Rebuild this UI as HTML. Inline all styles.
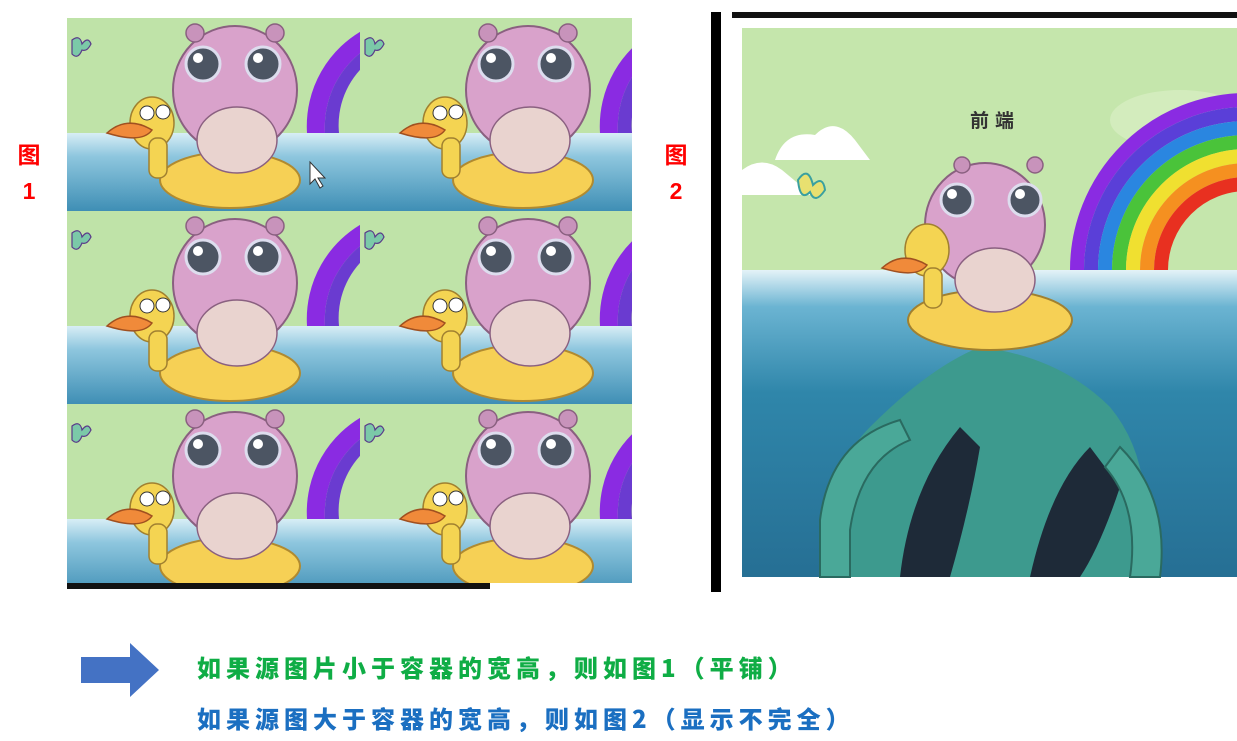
<!DOCTYPE html>
<html><head><meta charset="utf-8"><style>
html,body{margin:0;padding:0;background:#fff;width:1237px;height:741px;overflow:hidden;position:relative;font-family:"Liberation Sans","Noto Sans CJK SC",sans-serif}
.red{position:absolute;color:#f00;font-weight:bold;font-size:23px;line-height:36px;text-align:center;width:24px}
.t{position:absolute;left:197px;font-weight:900;font-size:24px;letter-spacing:5px;white-space:nowrap;font-family:"Noto Sans CJK SC","WenQuanYi Zen Hei",sans-serif}
</style></head><body>
<svg width="1237" height="741" style="position:absolute;left:0;top:0">
<defs>
<linearGradient id="wat" x1="0" y1="0" x2="0" y2="1"><stop offset="0" stop-color="#d8eef6"/><stop offset="0.3" stop-color="#8ec6de"/><stop offset="1" stop-color="#3f8fb5"/></linearGradient>
<linearGradient id="wat2" x1="0" y1="0" x2="0" y2="1"><stop offset="0" stop-color="#e4f3f8"/><stop offset="0.12" stop-color="#6bb4d2"/><stop offset="0.4" stop-color="#2f86aa"/><stop offset="1" stop-color="#266f94"/></linearGradient>
<symbol id="tile" viewBox="0 0 293 193" width="293" height="193">
<rect width="293" height="115" fill="#bfe3a8"/>
<rect y="115" width="293" height="78" fill="url(#wat)"/>
<path d="M240 115 A110 110 0 0 1 300 10 L300 30 A95 95 0 0 0 258 115Z" fill="#8a2be2"/>
<path d="M258 115 A95 95 0 0 1 300 30 L300 45 A82 82 0 0 0 272 115Z" fill="#6a3bd0"/>
<path d="M5 22 q8 -6 10 4 q6 -8 9 0 q-4 8 -9 6 q-4 10 -10 4z" fill="#7bc9a8" stroke="#5a3a8a" stroke-width="1.2"/>
<ellipse cx="163" cy="162" rx="70" ry="28" fill="#f6d055" stroke="#b08a30" stroke-width="2"/>
<ellipse cx="168" cy="72" rx="62" ry="64" fill="#d9a2cb" stroke="#8a6080" stroke-width="2"/>
<circle cx="128" cy="15" r="9" fill="#c893bb" stroke="#8a6080" stroke-width="1.5"/>
<circle cx="208" cy="15" r="9" fill="#c893bb" stroke="#8a6080" stroke-width="1.5"/>
<ellipse cx="170" cy="122" rx="40" ry="33" fill="#e9d3cf" stroke="#8a6080" stroke-width="1.5"/>
<circle cx="136" cy="46" r="17" fill="#4c5563" stroke="#dde" stroke-width="3"/>
<circle cx="196" cy="46" r="17" fill="#4c5563" stroke="#dde" stroke-width="3"/>
<circle cx="131" cy="40" r="5" fill="#fff"/><circle cx="191" cy="40" r="5" fill="#fff"/>
<ellipse cx="85" cy="105" rx="22" ry="26" fill="#f4d452" stroke="#a08030" stroke-width="1.5"/>
<path d="M40 115 q20 -18 45 -3 q-10 14 -45 3z" fill="#f08a3a" stroke="#a05020" stroke-width="1.5"/>
<circle cx="80" cy="95" r="7" fill="#fff" stroke="#333"/><circle cx="96" cy="94" r="7" fill="#fff" stroke="#333"/>
<rect x="82" y="120" width="18" height="40" rx="8" fill="#f4d452" stroke="#a08030" stroke-width="1.5"/>
</symbol>
<clipPath id="lc"><rect x="67" y="18" width="565" height="565"/></clipPath>
</defs>
<g clip-path="url(#lc)">
<use href="#tile" x="67" y="18"/><use href="#tile" x="360" y="18"/>
<use href="#tile" x="67" y="211"/><use href="#tile" x="360" y="211"/>
<use href="#tile" x="67" y="404"/><use href="#tile" x="360" y="404"/>
</g>
<rect x="67" y="583" width="423" height="6" fill="#111"/>
<path d="M310 162 l0 22 l5 -5 l5 9 l3 -2 l-5 -8 l7 0z" fill="#fff" stroke="#333" stroke-width="1"/>
<rect x="711" y="12" width="10" height="580" fill="#000"/>
<rect x="732" y="12" width="505" height="6" fill="#111"/>
<rect x="742" y="28" width="495" height="242" fill="#c5e6ac"/>
<ellipse cx="1180" cy="120" rx="70" ry="30" fill="#d3ecbd"/>
<rect x="742" y="270" width="495" height="307" fill="url(#wat2)"/>
<path d="M775 160 q10 -30 40 -25 q20 -20 40 5 l15 20z" fill="#fff"/>
<path d="M742 195 l0 -25 q20 -15 40 0 l30 25z" fill="#fff"/>
<path d="M798 180 q10 -15 15 5 q10 -10 12 5 q-10 15 -15 2 q-10 10 -12 -12z" fill="#e8e070" stroke="#3aa0a0" stroke-width="2"/>
<g fill="none">
<path d="M1077 270 A170 170 0 0 1 1247 100" stroke="#8a2be2" stroke-width="14"/>
<path d="M1091 270 A156 156 0 0 1 1247 114" stroke="#5a3fd8" stroke-width="14"/>
<path d="M1105 270 A142 142 0 0 1 1247 128" stroke="#2a86e0" stroke-width="14"/>
<path d="M1119 270 A128 128 0 0 1 1247 142" stroke="#4ac33a" stroke-width="14"/>
<path d="M1133 270 A114 114 0 0 1 1247 156" stroke="#f0e030" stroke-width="14"/>
<path d="M1147 270 A100 100 0 0 1 1247 170" stroke="#f59020" stroke-width="14"/>
<path d="M1161 270 A86 86 0 0 1 1247 184" stroke="#e83020" stroke-width="14"/>
</g>
<path d="M850 577 q-40 -90 20 -150 q60 -60 110 -80 q80 10 130 60 q50 60 30 170z" fill="#3d9a8e"/>
<path d="M900 577 q10 -90 60 -150 l20 20 q-10 60 -30 130z" fill="#1e2a38"/>
<path d="M1030 577 q20 -90 60 -130 l30 40 q-20 60 -40 90z" fill="#1e2a38"/>
<path d="M820 520 q10 -80 80 -100 l10 20 q-50 20 -60 90 l0 47 l-30 0z" fill="#4aa898" stroke="#2a6a60" stroke-width="2"/>
<path d="M1160 577 q10 -80 -40 -130 l-15 20 q35 40 25 110z" fill="#4aa898" stroke="#2a6a60" stroke-width="2"/>
<ellipse cx="990" cy="320" rx="82" ry="30" fill="#f6d055" stroke="#a08030" stroke-width="2"/>
<ellipse cx="985" cy="225" rx="60" ry="62" fill="#d9a2cb" stroke="#8a6080" stroke-width="2"/>
<circle cx="962" cy="165" r="8" fill="#c893bb" stroke="#8a6080" stroke-width="1.5"/>
<circle cx="1035" cy="165" r="8" fill="#c893bb" stroke="#8a6080" stroke-width="1.5"/>
<ellipse cx="995" cy="280" rx="40" ry="32" fill="#e9d3cf" stroke="#8a6080" stroke-width="1.5"/>
<circle cx="957" cy="200" r="16" fill="#4c5563" stroke="#dde" stroke-width="3"/>
<circle cx="1025" cy="200" r="16" fill="#4c5563" stroke="#dde" stroke-width="3"/>
<circle cx="952" cy="194" r="5" fill="#fff"/><circle cx="1020" cy="194" r="5" fill="#fff"/>
<ellipse cx="927" cy="250" rx="22" ry="26" fill="#f4d452" stroke="#a08030" stroke-width="1.5"/>
<path d="M882 268 q20 -18 45 -3 q-10 14 -45 3z" fill="#f08a3a" stroke="#a05020" stroke-width="1.5"/>
<rect x="924" y="268" width="18" height="40" rx="8" fill="#f4d452" stroke="#a08030" stroke-width="1.5"/>
<text x="995" y="127" font-size="19" font-weight="bold" fill="#333" text-anchor="middle" font-family="Noto Sans CJK SC,sans-serif" letter-spacing="6">前端</text>
<path d="M81 657 L130 657 L130 643 L159 670 L130 697 L130 683 L81 683Z" fill="#4472c4"/>
</svg>
<div class="red" style="left:17px;top:137px">图<br>1</div>
<div class="red" style="left:664px;top:137px">图<br>2</div>
<div class="t" style="top:649px;color:#0fad45">如果源图片小于容器的宽高，则如图1（平铺）</div>
<div class="t" style="top:700px;color:#1b6fc1">如果源图大于容器的宽高，则如图2（显示不完全）</div>
</body></html>
